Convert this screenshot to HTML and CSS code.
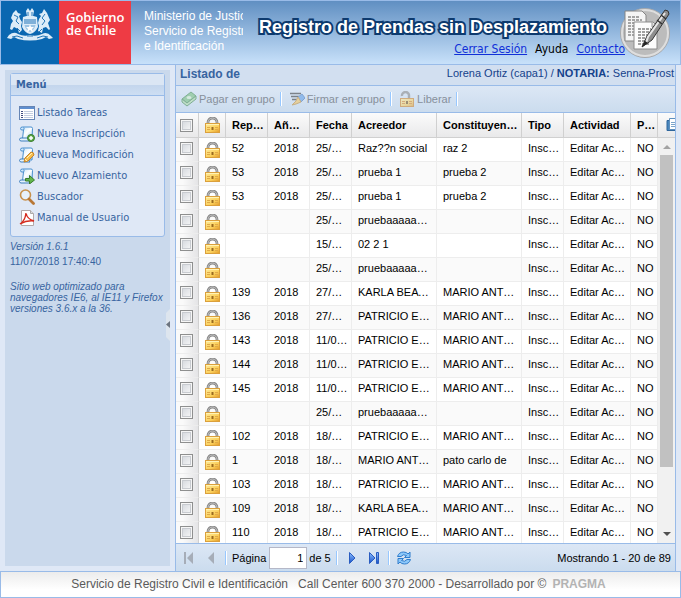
FILE: index.html
```html
<!DOCTYPE html>
<html lang="es">
<head>
<meta charset="utf-8">
<title>Registro de Prendas sin Desplazamiento</title>
<link rel="stylesheet" href="styles.css">
</head>
<body>
<svg class="sprite" aria-hidden="true">
  <defs>
    <linearGradient id="gold" x1="0" y1="0" x2="1" y2="1"><stop offset="0" stop-color="#ffec9c"/><stop offset=".6" stop-color="#fbd05c"/><stop offset="1" stop-color="#e39a28"/></linearGradient>
    <linearGradient id="sheet" x1="0" y1="0" x2="1" y2="1"><stop offset="0" stop-color="#b9dcf8"/><stop offset=".5" stop-color="#ffffff"/><stop offset="1" stop-color="#9ccbf0"/></linearGradient>
    <linearGradient id="blue" x1="0" y1="0" x2="0" y2="1"><stop offset="0" stop-color="#8fc0ff"/><stop offset="1" stop-color="#1450c8"/></linearGradient>
    <symbol id="lock" viewBox="0 0 16 16">
      <path d="M3 7V5.500a4.500 4.500 0 0 1 9 0V7" fill="none" stroke="#8a8a8a" stroke-width="2.800"/>
      <path d="M3 7V5.500a4.500 4.500 0 0 1 9 0V7" fill="none" stroke="#c0c0c0" stroke-width="1"/>
      <rect x=".5" y="6.500" width="14" height="9" fill="url(#gold)" stroke="#dba03c"/>
      <path d="M1 7.500h13" stroke="#fff3b5"/>
      <path d="M2 10.500h3M2 12.500h3M10 10.500h3M10 12.500h3" stroke="#e0aa48"/>
      <path d="M7.500 10v3" stroke="#9a6a20" stroke-width="2"/>
    </symbol>
    <symbol id="unlock" viewBox="0 0 16 16">
      <path d="M3 5a3.500 3.500 0 0 1 7-1v4" fill="none" stroke="#858585" stroke-width="2.400"/>
      <rect x="1.500" y="7.500" width="13" height="8" fill="url(#gold)" stroke="#cf8020"/>
      <path d="M3 10.500h3M3 12.500h3M10 10.500h3M10 12.500h3" stroke="#d88020"/>
      <path d="M8 10v3" stroke="#704a10" stroke-width="2"/>
    </symbol>
    <symbol id="scroll" viewBox="0 0 16 16">
      <path d="M3.500 1H12q1.500 0 1.500 1.500L13 13H3.500L4.500 4H3Q1.500 4 1.500 2.500 1.500 1 3.500 1z" fill="url(#sheet)" stroke="#4a90cf"/>
      <path d="M4.500 4q1.200-1 .2-2.500" fill="none" stroke="#4a90cf"/>
      <path d="M2 12h8.500q-1 1.500.5 3H2q-1.500-.2-1.500-1.500T2 12z" fill="#e4f2fd" stroke="#3e7fbd"/>
    </symbol>
  </defs>
</svg>

<header class="banner">
  <div class="gov">
    <div class="gov-arms">
      <svg class="arms" viewBox="0 0 46 34" aria-hidden="true">
        <g fill="#dcecf8">
          <path d="M19 3l2-3 2 3 2-3 2 3-1 5h-6z"/>
          <path d="M16 9q7-3 14 0l1 10q-3 6-8 7-5-1-8-7z"/>
          <path d="M6 5l3-3 2 3 3 1-2 2 1 3 2 3-1 4 1 4-3 3-1-4-4-2-2 3-2-1 1-5 2-3-2-3z"/>
          <path d="M40 5l-3-4-2 4-3 1 2 2-2 3-1 4 1 3-1 5 4 2 1-5 3-1 3 3 1-1-2-6 2-3z"/>
          <path d="M2 27q5-4 9-1 6 3 12 1 6 2 12-1 5-3 9 2l2 2-4 1-3-2-4 2q-12 3-24 0l-4-2-3 2-4-1z"/>
        </g>
        <path d="M17 11h12v5H17z" fill="#7fb0d8"/>
        <path d="M17.500 17h11q-1 5-5.500 7-4.500-2-5.500-7z" fill="#9cc4e4"/>
        <path d="M23 16l1 3h3l-2 2 1 3-3-2-3 2 1-3-2-2h3z" fill="#fff"/>
        <path d="M7 7l4 2-2 4 3 3M38 6l-3 4 3 3-3 4M10 20l3 3M35 21l-3 3M5 29l5-1 6 2M41 29l-5-1-6 2M20 28h6M21 4v4M25 4v4" fill="none" stroke="#2878b8"/>
      </svg>
    </div>
    <div class="gov-name">Gobierno<br>de Chile</div>
  </div>
  <p class="ministry">Ministerio de Justicia<br>Servicio de Registro<br>e Identificación</p>
  <div class="heading">
    <h1>Registro de Prendas sin Desplazamiento</h1>
    <nav class="links"><a href="#">Cerrar Sesión</a><span>Ayuda</span><a href="#">Contacto</a></nav>
  </div>
  <svg class="badge" viewBox="0 0 52 52" aria-hidden="true">
    <circle cx="26" cy="26" r="24.500" fill="#bcbcbc" stroke="#a7a9ac"/>
    <circle cx="26" cy="26" r="23" fill="none" stroke="#dedede" stroke-width="2"/>
    <path d="M6 4h17l4 4v26H6z" fill="#f5f5f5" stroke="#858585"/>
    <path d="M9 10h11M9 13h14M9 16h14M9 19h8M9 22h8M9 25h8M9 28h8" stroke="#555" stroke-dasharray="3 1"/>
    <path d="M15 15h19l4 4v23H15z" fill="#fcfcfc" stroke="#8c8c8c"/>
    <path d="M33 15v5h5" fill="#ddd" stroke="#999"/>
    <path d="M19 22h13M19 25h15M19 28h15M19 31h12M19 34h10M19 37h12" stroke="#444" stroke-dasharray="3 1"/>
    <path d="M46 3q4 0 4 4L33 33l-10 7 5-11z" fill="#8e8e8e" stroke="#333"/>
    <path d="M46 6L29 30l-2 6" fill="none" stroke="#e6e6e6" stroke-width="2"/>
    <path d="M42 8l5 4M38 13l5 4" stroke="#333" stroke-width="1.500"/>
    <path d="M23 40l3-6 3 2z" fill="#222"/>
  </svg>
</header>

<div class="workspace">
  <aside class="side">
    <section class="menu">
      <h2>Menú</h2>
      <ul>
        <li><a href="#"><svg viewBox="0 0 16 16" aria-hidden="true"><rect x=".5" y="1.500" width="15" height="13" fill="#fff" stroke="#6685b5"/><path d="M1 3h14" stroke="#5f8fd0" stroke-width="2"/><path d="M2 6.500h2M2 8.500h2M2 10.500h2M2 12.500h2" stroke="#444f80"/><path d="M5 6.500h9M5 8.500h9M5 10.500h9M5 12.500h9" stroke="#c3cddf"/></svg>Listado Tareas</a></li>
        <li><a href="#"><svg viewBox="0 0 16 16" aria-hidden="true"><use href="#scroll"/><circle cx="12" cy="12" r="3.500" fill="#5faa4b" stroke="#397c2d"/><path d="M10 12h4M12 10v4" stroke="#fff" stroke-width="1.500"/></svg>Nueva Inscripción</a></li>
        <li><a href="#"><svg viewBox="0 0 16 16" aria-hidden="true"><use href="#scroll"/><path d="M5 15l1-4 6-6q3 0 3 3l-6 6z" fill="#f7bd4c" stroke="#c68428"/><path d="M6 12l2 2M8 11l5-5" stroke="#fff0bb"/></svg>Nueva Modificación</a></li>
        <li><a href="#"><svg viewBox="0 0 16 16" aria-hidden="true"><use href="#scroll"/><path d="M6.500 10.500h4v-3l5 4.500-5 4v-3h-4z" fill="#63b64c" stroke="#397c2d"/></svg>Nuevo Alzamiento</a></li>
        <li><a href="#"><svg viewBox="0 0 16 16" aria-hidden="true"><circle cx="6.500" cy="6" r="5" fill="#e7f1fb" stroke="#c8914c" stroke-width="1.600"/><path d="M10 10l4.500 4.500" stroke="#b87735" stroke-width="2.800" stroke-linecap="round"/></svg>Buscador</a></li>
        <li><a href="#"><svg viewBox="0 0 16 16" aria-hidden="true"><path d="M2.500.5h9l3 3v12h-12z" fill="#fff" stroke="#b1a9a9"/><path d="M11.500.5v3h3" fill="#ddd" stroke="#aaa"/><path d="M1 14Q6 11 7 3q1 6 8 8-7-1-14 3z" fill="none" stroke="#d52b1e" stroke-width="1.400"/></svg>Manual de Usuario</a></li>
      </ul>
    </section>
    <div class="about">
      <p><em>Versión 1.6.1</em></p>
      <p>11/07/2018 17:40:40</p>
      <p class="note"><em>Sitio web optimizado para navegadores IE6, al IE11 y Firefox versiones 3.6.x a la 36.</em></p>
    </div>
  </aside>
  <div class="splitter"><button type="button" aria-label="Ocultar menú"><svg viewBox="0 0 4 32" aria-hidden="true"><path d="M4 0L0 4v24l4 4z" fill="#dde5ee"/><path d="M4 12v7L0 15.500z" fill="#6d7580"/></svg></button></div>

  <main class="panel">
    <div class="panel-head">
      <h2>Listado de Tareas</h2>
      <p>Lorena Ortiz (capa1) / <b>NOTARIA:</b> Senna-Prost</p>
    </div>
    <div class="toolbar">
      <button type="button" disabled><svg viewBox="0 0 16 16" aria-hidden="true"><path d="M1 8l9-7 5 4-9 7z" fill="#73bd78" stroke="#3d8749"/><path d="M1 8v3l5 4 9-7V5l-9 7z" fill="#b2dda8" stroke="#3d8749"/><ellipse cx="8" cy="6.500" rx="2.500" ry="1.500" fill="#d7f0d0"/></svg>Pagar en grupo</button>
      <i class="rule"></i>
      <button type="button" disabled><svg viewBox="0 0 16 16" aria-hidden="true"><path d="M1 2.500h11M2 5.500h8M3 8.500h5" stroke="#333" stroke-width="1.500"/><path d="M9 6l4-3 3 4-4 4z" fill="#5a9ce8" stroke="#3e74b8"/><path d="M9 6l3 5-5 2-4 1 4-4z" fill="#f5c35a" stroke="#c18a30"/></svg>Firmar en grupo</button>
      <i class="rule"></i>
      <button type="button" disabled><svg viewBox="0 0 16 16" aria-hidden="true"><use href="#unlock"/></svg>Liberar</button>
      <i class="rule"></i>
    </div>

    <div class="grid">
      <table>
        <colgroup><col class="c-check"><col class="c-lock"><col class="c-s"><col class="c-s"><col class="c-s"><col><col><col class="c-s"><col class="c-act"><col class="c-p"></colgroup>
        <thead>
          <tr><th><input type="checkbox" aria-label="Seleccionar todo"></th><th><svg class="lock"><use href="#lock"/></svg></th><th>Repertorio</th><th>Año Rep.</th><th>Fecha</th><th>Acreedor</th><th>Constituyentes</th><th>Tipo</th><th>Actividad</th><th>Pagado</th></tr>
        </thead>
        <tbody>
          <tr><td><input type="checkbox" aria-label="Seleccionar fila 1"></td><td><svg class="lock"><use href="#lock"/></svg></td><td>52</td><td>2018</td><td>25/06/2018</td><td>Raz??n social</td><td>raz 2</td><td>Inscripción</td><td>Editar Acreedor</td><td>NO</td></tr>
          <tr><td><input type="checkbox" aria-label="Seleccionar fila 2"></td><td><svg class="lock"><use href="#lock"/></svg></td><td>53</td><td>2018</td><td>25/06/2018</td><td>prueba 1</td><td>prueba 2</td><td>Inscripción</td><td>Editar Acreedor</td><td>NO</td></tr>
          <tr><td><input type="checkbox" aria-label="Seleccionar fila 3"></td><td><svg class="lock"><use href="#lock"/></svg></td><td>53</td><td>2018</td><td>25/06/2018</td><td>prueba 1</td><td>prueba 2</td><td>Inscripción</td><td>Editar Acreedor</td><td>NO</td></tr>
          <tr><td><input type="checkbox" aria-label="Seleccionar fila 4"></td><td><svg class="lock"><use href="#lock"/></svg></td><td></td><td></td><td>25/06/2018</td><td>pruebaaaaaaaa</td><td></td><td>Inscripción</td><td>Editar Acreedor</td><td>NO</td></tr>
          <tr><td><input type="checkbox" aria-label="Seleccionar fila 5"></td><td><svg class="lock"><use href="#lock"/></svg></td><td></td><td></td><td>15/06/2018</td><td>02 2 1</td><td></td><td>Inscripción</td><td>Editar Acreedor</td><td>NO</td></tr>
          <tr><td><input type="checkbox" aria-label="Seleccionar fila 6"></td><td><svg class="lock"><use href="#lock"/></svg></td><td></td><td></td><td>25/06/2018</td><td>pruebaaaaaaaa</td><td></td><td>Inscripción</td><td>Editar Acreedor</td><td>NO</td></tr>
          <tr><td><input type="checkbox" aria-label="Seleccionar fila 7"></td><td><svg class="lock"><use href="#lock"/></svg></td><td>139</td><td>2018</td><td>27/06/2018</td><td>KARLA BEATRIZ</td><td>MARIO ANTONIO</td><td>Inscripción</td><td>Editar Acreedor</td><td>NO</td></tr>
          <tr><td><input type="checkbox" aria-label="Seleccionar fila 8"></td><td><svg class="lock"><use href="#lock"/></svg></td><td>136</td><td>2018</td><td>27/06/2018</td><td>PATRICIO ENRIQUE</td><td>MARIO ANTONIO</td><td>Inscripción</td><td>Editar Acreedor</td><td>NO</td></tr>
          <tr><td><input type="checkbox" aria-label="Seleccionar fila 9"></td><td><svg class="lock"><use href="#lock"/></svg></td><td>143</td><td>2018</td><td>11/07/2018</td><td>PATRICIO ENRIQUE</td><td>MARIO ANTONIO</td><td>Inscripción</td><td>Editar Acreedor</td><td>NO</td></tr>
          <tr><td><input type="checkbox" aria-label="Seleccionar fila 10"></td><td><svg class="lock"><use href="#lock"/></svg></td><td>144</td><td>2018</td><td>11/07/2018</td><td>PATRICIO ENRIQUE</td><td>MARIO ANTONIO</td><td>Inscripción</td><td>Editar Acreedor</td><td>NO</td></tr>
          <tr><td><input type="checkbox" aria-label="Seleccionar fila 11"></td><td><svg class="lock"><use href="#lock"/></svg></td><td>145</td><td>2018</td><td>11/07/2018</td><td>PATRICIO ENRIQUE</td><td>MARIO ANTONIO</td><td>Inscripción</td><td>Editar Acreedor</td><td>NO</td></tr>
          <tr><td><input type="checkbox" aria-label="Seleccionar fila 12"></td><td><svg class="lock"><use href="#lock"/></svg></td><td></td><td></td><td>25/06/2018</td><td>pruebaaaaaaaa</td><td></td><td>Inscripción</td><td>Editar Acreedor</td><td>NO</td></tr>
          <tr><td><input type="checkbox" aria-label="Seleccionar fila 13"></td><td><svg class="lock"><use href="#lock"/></svg></td><td>102</td><td>2018</td><td>18/06/2018</td><td>PATRICIO ENRIQUE</td><td>MARIO ANTONIO</td><td>Inscripción</td><td>Editar Acreedor</td><td>NO</td></tr>
          <tr><td><input type="checkbox" aria-label="Seleccionar fila 14"></td><td><svg class="lock"><use href="#lock"/></svg></td><td>1</td><td>2018</td><td>18/06/2018</td><td>MARIO ANTONIO</td><td>pato carlo de</td><td>Inscripción</td><td>Editar Acreedor</td><td>NO</td></tr>
          <tr><td><input type="checkbox" aria-label="Seleccionar fila 15"></td><td><svg class="lock"><use href="#lock"/></svg></td><td>103</td><td>2018</td><td>18/06/2018</td><td>PATRICIO ENRIQUE</td><td>MARIO ANTONIO</td><td>Inscripción</td><td>Editar Acreedor</td><td>NO</td></tr>
          <tr><td><input type="checkbox" aria-label="Seleccionar fila 16"></td><td><svg class="lock"><use href="#lock"/></svg></td><td>109</td><td>2018</td><td>18/06/2018</td><td>KARLA BEATRIZ</td><td>MARIO ANTONIO</td><td>Inscripción</td><td>Editar Acreedor</td><td>NO</td></tr>
          <tr><td><input type="checkbox" aria-label="Seleccionar fila 17"></td><td><svg class="lock"><use href="#lock"/></svg></td><td>110</td><td>2018</td><td>18/06/2018</td><td>PATRICIO ENRIQUE</td><td>MARIO ANTONIO</td><td>Inscripción</td><td>Editar Acreedor</td><td>NO</td></tr>
        </tbody>
      </table>
      <div class="edge">
        <div class="edge-head"><svg viewBox="0 0 16 16" aria-hidden="true"><path d="M1 2.500h13v10H1z" fill="#4a87bd" stroke="#2f669c"/><path d="M3.500.5h8v11h-8z" fill="#fff" stroke="#5e8fbd"/><path d="M5 4.500h5M5 6.500h5M5 8.500h5" stroke="#7da5ca"/></svg></div>
        <div class="scrollbar">
          <svg viewBox="0 0 17 17" aria-hidden="true"><path d="M5 11l4-4 4 4z" fill="#a3a3a3"/></svg>
          <div class="track"><div class="thumb"></div></div>
          <svg viewBox="0 0 17 17" aria-hidden="true"><path d="M5 6l4 4 4-4z" fill="#505050"/></svg>
        </div>
      </div>
    </div>

    <div class="pager">
      <button type="button" disabled aria-label="Primera página"><svg viewBox="0 0 16 16"><path d="M3 2h2v12H3zM12 2v12L6 8z" fill="#a6adb8"/></svg></button>
      <button type="button" disabled aria-label="Página anterior"><svg viewBox="0 0 16 16"><path d="M11 2v12L5 8z" fill="#a6adb8"/></svg></button>
      <i class="rule"></i>
      <label for="page">Página</label>
      <input id="page" type="text" value="1">
      <span>de 5</span>
      <i class="rule"></i>
      <button type="button" aria-label="Página siguiente"><svg viewBox="0 0 16 16"><path d="M5.500 2.500v11L11 8z" fill="url(#blue)" stroke="#2a5cc0"/></svg></button>
      <button type="button" aria-label="Última página"><svg viewBox="0 0 16 16"><path d="M3.500 2.500v11L9 8zM10.500 2.500h2v11h-2z" fill="url(#blue)" stroke="#2a5cc0"/></svg></button>
      <i class="rule"></i>
      <button type="button" aria-label="Actualizar"><svg viewBox="0 0 16 16"><path d="M1.500 6.500Q3 2 7.500 2q3 0 4.500 2l2-2v5.500H8.500l2-2Q7 3.500 5 6.500z" fill="#8cc8fa" stroke="#2f7ccc"/><path d="M14.500 9.500Q13 14 8.500 14q-3 0-4.500-2l-2 2V8.500h5.500l-2 2Q9 12.500 11 9.500z" fill="#8cc8fa" stroke="#2f7ccc"/></svg></button>
      <output>Mostrando 1 - 20 de 89</output>
    </div>
  </main>
</div>

<footer class="foot"><span>Servicio de Registro Civil e Identificación</span><span>Call Center 600 370 2000 - Desarrollado por ©</span><b>PRAGMA</b></footer>
</body>
</html>
```
FILE: styles.css
```css
* { box-sizing: border-box; }
body {
  margin: 0;
  height: 100vh;
  display: flex;
  flex-direction: column;
  overflow: hidden;
  background: #dfe8f6;
  font: 11px/14px "Liberation Sans", Arial, sans-serif;
  color: #000;
}
h1, h2, p, ul { margin: 0; padding: 0; }
button { border: 0; padding: 0; background: none; font: inherit; color: inherit; }
svg { display: block; flex: none; }
.sprite { position: absolute; width: 0; height: 0; }

.banner {
  display: flex;
  flex: none;
  height: 65px;
  border: 1px solid #99bbe8;
  background: linear-gradient(#608fc2, #c8e1fa);
}
.gov { display: flex; width: 130px; flex: none; color: #fff; }
.gov-arms { width: 58px; padding: 7px 6px; background: #0a67b1; }
.arms { width: 46px; height: 34px; }
.gov-name { flex: 1; padding: 10px 0 0 7px; background: #ee3b44; font: 600 13px/13px "Open Sans", sans-serif; }
.ministry {
  width: 99px;
  margin: 8px 0 0 13px;
  flex: none;
  overflow: hidden;
  white-space: nowrap;
  color: #fff;
  font-size: 12px;
  line-height: 15px;
}
.heading { margin-left: auto; display: flex; flex-direction: column; align-items: flex-end; }
.heading h1 {
  margin-top: 14px;
  color: #fff;
  font-size: 18px;
  line-height: 24px;
  white-space: nowrap;
  -webkit-text-stroke: 4px #0d3a6e;
  paint-order: stroke fill;
}
.links { display: flex; gap: 8px; margin: 2px -18px 0 0; font: 12px/16px "DejaVu Sans Condensed", "DejaVu Sans", sans-serif; }
.links a { color: #1030d8; }
.badge { width: 52px; height: 52px; margin: 6px 9px 0 12px; }

.workspace { flex: 1; min-height: 0; display: flex; padding-right: 5px; }
.side { width: 165px; flex: none; margin: 5px 0 5px 5px; padding: 3px 5px; background: #cad9ec; color: #3764a0; }
.menu { border: 1px solid #99bbe8; border-radius: 3px; background: #dfe8f6; }
.menu h2 {
  padding: 3px 5px 2px;
  border-bottom: 1px solid #99bbe8;
  background: linear-gradient(#dbe6f4 50%, #c3d5ec 50%, #cddef3);
  color: #3764a0;
  font: bold 11px/16px "DejaVu Sans Condensed", "DejaVu Sans", sans-serif;
}
.menu ul { list-style: none; padding: 6px 8px 8px; }
.menu a {
  display: flex;
  align-items: center;
  gap: 2px;
  height: 21px;
  color: #3764a0;
  text-decoration: none;
  white-space: nowrap;
  font: 11px/14px "DejaVu Sans Condensed", "DejaVu Sans", sans-serif;
}
.menu svg { width: 16px; height: 16px; }
.about { padding-top: 2px; font-size: 10px; line-height: 15px; }
.about .note { margin: 12px -5px 0 0; line-height: 11px; }

.splitter { width: 5px; flex: none; display: flex; align-items: center; }
.splitter button { width: 4px; height: 32px; margin-left: -4px; margin-top: 14px; }
.splitter svg { width: 4px; height: 32px; }

.panel { flex: 1; min-width: 0; display: flex; flex-direction: column; border-left: 1px solid #99bbe8; border-right: 1px solid #99bbe8; }
.panel-head {
  display: flex;
  justify-content: space-between;
  flex: none;
  height: 20px;
  padding: 1px 1px 0 4px;
  overflow: hidden;
  background: #d2dff0;
  color: #15428b;
  white-space: nowrap;
}
.panel-head h2 { width: 70px; font-size: 12px; line-height: 16px; white-space: normal; color: #3764a0; }
.toolbar {
  display: flex;
  align-items: center;
  flex: none;
  height: 28px;
  padding: 0 5px;
  gap: 5px;
  border-top: 1px solid #99bbe8;
  border-bottom: 1px solid #99bbe8;
  background: linear-gradient(#dce7f5, #cbdcee);
}
.toolbar button { display: flex; align-items: center; gap: 2px; color: #87909b; }
.toolbar .rule { margin: 0 2px 0 0; }
.toolbar svg { width: 16px; height: 16px; opacity: .55; }
.rule { width: 2px; height: 14px; flex: none; border-left: 1px solid #98c8ff; background: #fff; }

.grid { flex: 1; min-height: 0; display: flex; overflow: hidden; background: #fff; }
table { flex: 1; min-width: 0; width: 100%; table-layout: fixed; border-collapse: separate; border-spacing: 0; align-self: flex-start; }
.c-check { width: 23px; }
.c-lock { width: 27px; }
.c-s { width: 42px; }
.c-act { width: 67px; }
.c-p { width: 27px; }
th, td {
  height: 24px;
  padding: 0 3px 3px 6px;
  overflow: hidden;
  white-space: nowrap;
  text-overflow: ellipsis;
  text-align: left;
  border-right: 1px solid #ededed;
  border-bottom: 1px solid #ededed;
}
th { height: 25px; padding-bottom: 0; border-color: #d0d0d0; background: linear-gradient(#fbfbfb, #e9e9ea); }
tbody tr:nth-child(even) { background: #fafafa; }
th:first-child, td:first-child { padding-left: 4px; padding-right: 0; }
td:first-child { background: linear-gradient(90deg, #fafafa 30%, #e4e4e6); border-right-color: #d0d0d0; }
th:last-child, td:last-child { padding-right: 0; }
.lock { width: 16px; height: 16px; }
td .lock { height: 20px; padding-top: 4px; }
input[type="checkbox"] {
  appearance: none;
  display: block;
  width: 13px;
  height: 13px;
  margin: 0;
  border: 1px solid #8e8f8f;
  background: linear-gradient(135deg, #d0d4da, #fafafa);
  box-shadow: inset 0 0 0 1px #f6f6f6, inset 0 0 0 2px #c8cbd0;
}
.edge { width: 17px; flex: none; display: flex; flex-direction: column; }
.edge-head { height: 25px; flex: none; padding: 5px 0 0 8px; overflow: hidden; border-bottom: 1px solid #d0d0d0; background: linear-gradient(#fbfbfb, #e9e9ea); }
.edge-head svg { width: 16px; height: 16px; }
.scrollbar { flex: 1; min-height: 0; display: flex; flex-direction: column; background: #f1f1f1; }
.scrollbar svg { width: 17px; height: 17px; }
.track { flex: 1; padding: 0 2px; }
.thumb { height: 84%; background: #c1c1c1; }

.pager {
  display: flex;
  align-items: center;
  flex: none;
  height: 28px;
  padding: 0 4px 0 2px;
  border-top: 1px solid #99bbe8;
  background: linear-gradient(#dce7f5, #cbdcee);
}
.pager button { margin: 0 3px; }
.pager button svg { width: 16px; height: 16px; }
.pager .rule { margin: 0 3px; }
.pager label { margin: 0 3px 0 2px; }
.pager input { width: 38px; height: 22px; border: 1px solid #b5b8c8; padding: 0 3px; background: #fff; text-align: right; font: inherit; }
.pager span { margin: 0 2px; }
.pager output { margin-left: auto; }

.foot {
  display: flex;
  justify-content: center;
  flex: none;
  height: 27px;
  padding: 5px 4px 0 0;
  gap: 10px;
  border: 1px solid #99bbe8;
  background: linear-gradient(#ececec, #fff 70%);
  color: #5a5a5a;
  font-size: 12px;
  line-height: 14px;
  white-space: nowrap;
}
.foot b { margin-left: -4px; color: #b3b3b3; }
```
